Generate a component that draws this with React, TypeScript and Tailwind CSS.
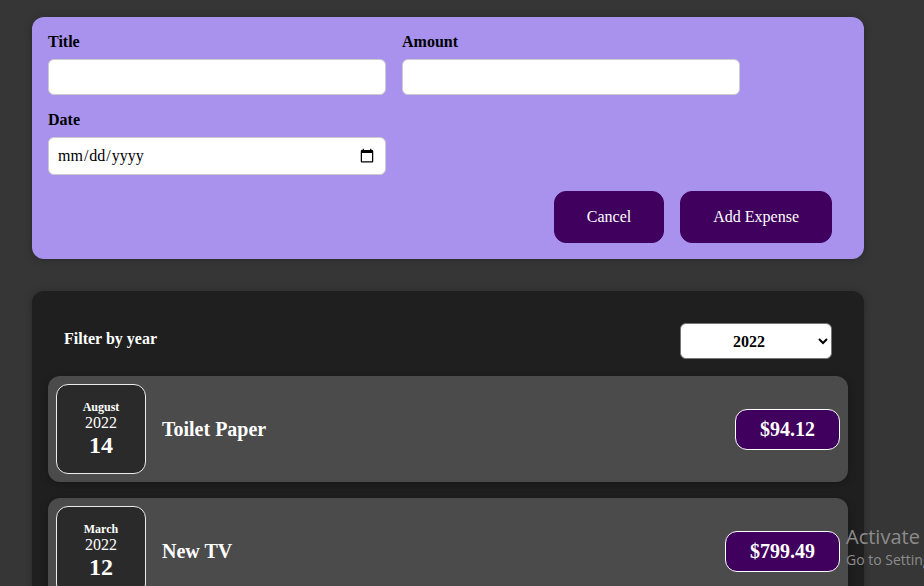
import React from "react";

const expenses = [
  { id: "e1", title: "Toilet Paper", amount: 94.12, month: "August", year: "2022", day: "14" },
  { id: "e2", title: "New TV", amount: 799.49, month: "March", year: "2022", day: "12" },
];

const ExpenseDate = ({ month, year, day }: { month: string; year: string; day: string }) => (
  <div className="flex h-[90px] w-[90px] shrink-0 flex-col items-center justify-center rounded-xl border border-[#ececec] bg-[#2a2a2a] text-white">
    <div className="text-[12px] font-bold leading-[14px]">{month}</div>
    <div className="text-[16px] leading-[18px]">{year}</div>
    <div className="text-[24px] font-bold leading-[27px]">{day}</div>
  </div>
);

const ExpenseItem = ({ e }: { e: (typeof expenses)[number] }) => (
  <div className="flex items-center justify-between rounded-xl bg-[#4b4b4b] p-2 shadow-[0_2px_8px_rgba(0,0,0,0.25)]">
    <ExpenseDate month={e.month} year={e.year} day={e.day} />
    <div className="flex flex-1 items-center">
      <h2 className="mx-4 flex-1 text-[20px] font-bold text-white">{e.title}</h2>
      <div className="rounded-xl border border-white bg-[#40005d] px-6 py-2 text-[20px] font-bold leading-[23px] text-white">
        ${e.amount.toFixed(2)}
      </div>
    </div>
  </div>
);

export default function App() {
  return (
    <div className="relative h-[586px] overflow-hidden bg-[#363636] pl-8 pt-[17px] font-['Liberation_Serif',serif] text-[16px]">
      <div className="w-[832px] rounded-xl bg-[#a892ee] p-4 shadow-[0_1px_8px_rgba(0,0,0,0.25)]">
        <div className="mb-4 flex flex-wrap gap-4">
          <div>
            <label className="mb-2 block font-bold leading-[18px]">Title</label>
            <input type="text" className="block w-[338px] rounded-[6px] border border-[#ccc] bg-white p-2 leading-[18px]" />
          </div>
          <div>
            <label className="mb-2 block font-bold leading-[18px]">Amount</label>
            <input type="number" className="block w-[338px] rounded-[6px] border border-[#ccc] bg-white p-2 leading-[18px]" />
          </div>
          <div>
            <label className="mb-2 block font-bold leading-[18px]">Date</label>
            <input type="date" className="block h-[38px] w-[338px] rounded-[6px] border border-[#ccc] bg-white px-2 leading-[18px]" />
          </div>
        </div>
        <div className="flex justify-end gap-4 pr-4">
          <button className="h-[52px] rounded-xl border border-[#40005d] bg-[#40005d] px-8 text-white">Cancel</button>
          <button className="h-[52px] rounded-xl border border-[#40005d] bg-[#40005d] px-8 text-white">Add Expense</button>
        </div>
      </div>

      <div className="mt-8 h-[400px] w-[832px] rounded-xl bg-[#1f1f1f] p-4 shadow-[0_1px_8px_rgba(0,0,0,0.25)]">
        <div className="mb-[17px] mt-4 flex items-center justify-between px-4 text-white">
          <label className="mb-1 font-bold">Filter by year</label>
          <select
            defaultValue="2022"
            className="h-[36px] w-[152px] rounded-[6px] border border-[#767676] bg-white px-12 font-bold text-black"
          >
            <option value="2022">2022</option>
            <option value="2021">2021</option>
            <option value="2020">2020</option>
            <option value="2019">2019</option>
          </select>
        </div>
        <div className="flex flex-col gap-4">
          {expenses.map((e) => (
            <ExpenseItem key={e.id} e={e} />
          ))}
        </div>
      </div>

      <div className="pointer-events-none absolute left-[846px] top-[524px] whitespace-nowrap font-['Open_Sans',sans-serif] text-[#8c8c8c]">
        <div className="text-[20px] leading-[26px]">Activate Windows</div>
        <div className="text-[14px] leading-[20px]">Go to Settings to activate Windows.</div>
      </div>
    </div>
  );
}
